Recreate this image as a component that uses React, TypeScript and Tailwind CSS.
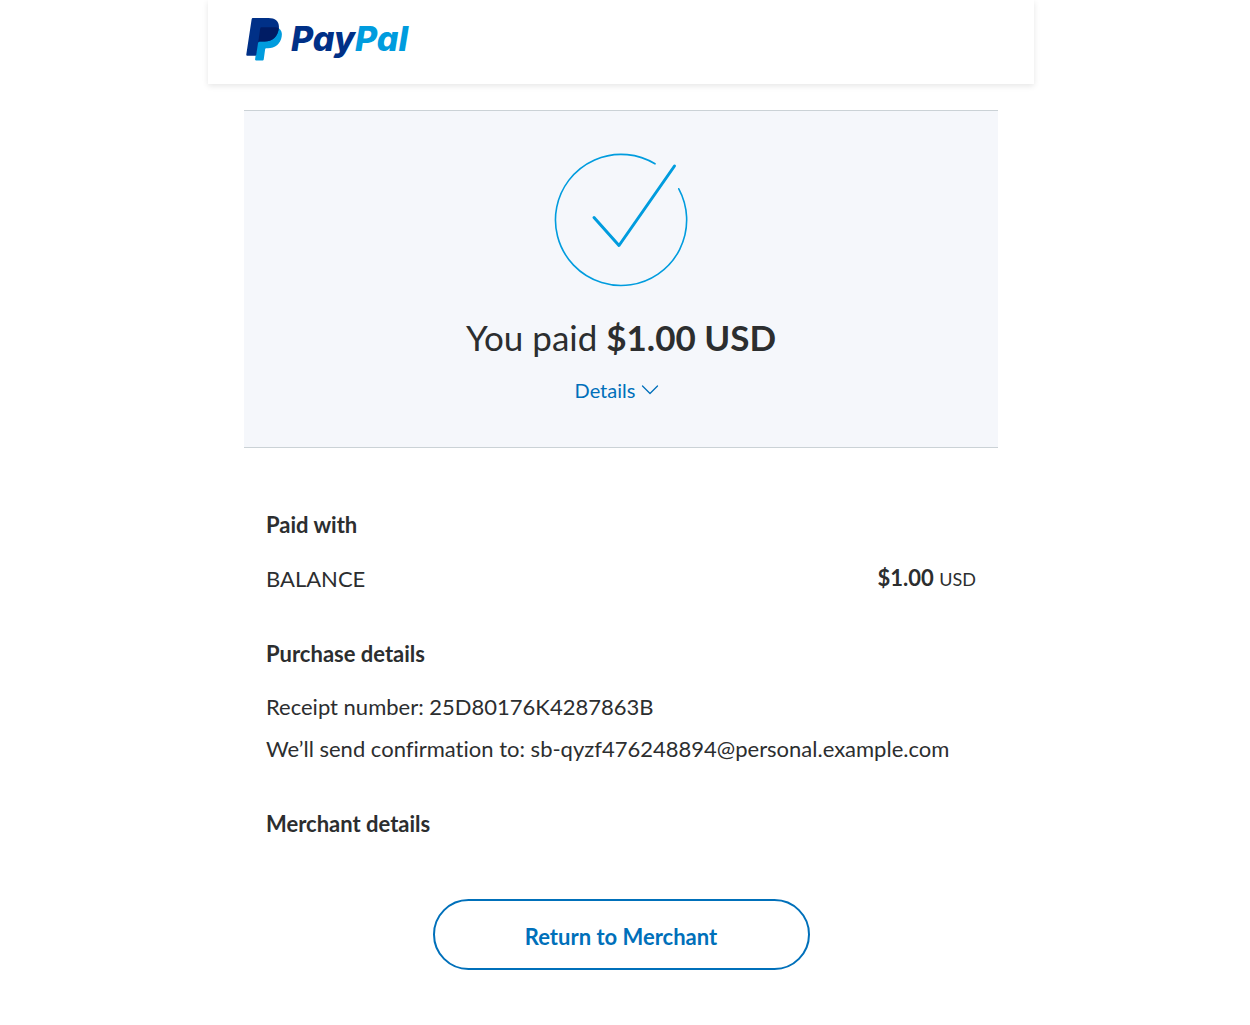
import React from "react";

const PayPalLogo = () => (
  <div className="flex items-center gap-2 h-11">
    <svg width="37" height="44" viewBox="0 0 37 44" aria-hidden="true">
      <path
        fill="#009cde"
        d="M32.5 11C35.5 13 36.4 16 35.7 19.5C34.5 27 29 31.2 22 31.2H20.5C19.7 31.2 19.2 31.7 19.1 32.5L17.8 42C17.7 43 17.1 43.5 16.3 43.5H10C9.3 43.5 9 43 9.1 42.3L13 13Z"
      />
      <path
        fill="#003087"
        d="M7.2 1H22.5C29.5 1 33.4 4.6 32.9 10.8C32.1 19.5 26.5 24.6 18.5 24.6H14C12.8 24.6 12.2 25.1 12 26.2L10.3 37.4C10.2 38.3 9.8 38.7 9 38.7H1.2C.5 38.7.2 38.2.3 37.5L5.6 2.4C5.8 1.4 6.3 1 7.2 1Z"
      />
      <path
        fill="#001c64"
        d="M15.5 10.3H28C30 10.3 31.5 10.5 32.8 11C32 19.5 26.5 24.6 18.5 24.6H14C13.2 24.6 12.5 24.8 12.2 25.4L14.2 11.5C14.3 10.7 14.8 10.3 15.5 10.3Z"
      />
    </svg>
    <span className="font-['Inter',sans-serif] text-[34px] leading-11 font-extrabold italic text-[#003087] [font-feature-settings:'cv11']">
      Pay<span className="text-[#009cde]">Pal</span>
    </span>
  </div>
);

const SuccessMark = () => (
  <svg
    width="134"
    height="134"
    viewBox="0 0 134 134"
    fill="none"
    stroke="#009cde"
    strokeLinecap="round"
    aria-hidden="true"
  >
    <path strokeWidth="1.6" d="M101 10.8A65.6 65.6 0 1 0 124.8 35.8" />
    <path strokeWidth="3" strokeLinejoin="round" d="M40 64.5L65 92.5L120.5 13" />
  </svg>
);

interface SectionProps {
  title: string;
  children?: React.ReactNode;
}

const Section: React.FC<SectionProps> = ({ title, children }) => (
  <section className="pb-[33px]">
    <h2 className="font-bold leading-[42px] mb-[11px]">{title}</h2>
    {children}
  </section>
);

export default function App() {
  return (
    <div className="bg-white pr-2 pb-14 font-['Lato',sans-serif] text-[22px] leading-[42px] text-[#2c2e2f] [font-variant-ligatures:none]">
      <div className="mx-auto max-w-[826px]">
        <header className="px-[38px] pt-[17px] pb-[23px] shadow-[0_2px_6px_rgba(0,0,0,0.1)]">
          <PayPalLogo />
        </header>

        <main className="mx-9 mt-[26px]">
          <div className="flex flex-col items-center border-y border-[#cbd2d6] bg-[#f5f7fb] pt-[42px] pb-9">
            <SuccessMark />
            <h1 className="mt-[26px] text-[35px] leading-[48px]">
              You paid <strong>$1.00 USD</strong>
            </h1>
            <button
              type="button"
              className="mt-2 mr-2 flex items-center gap-1.5 text-[20px] leading-[42px] text-[#0070ba]"
            >
              Details
              <svg
                width="18"
                height="10"
                viewBox="0 0 18 10"
                fill="none"
                stroke="currentColor"
                strokeWidth="1.3"
                strokeLinecap="round"
                strokeLinejoin="round"
                aria-hidden="true"
              >
                <path d="M1.5 1L9 8.5L16.5 1" />
              </svg>
            </button>
          </div>

          <div className="px-[22px] pt-14">
            <Section title="Paid with">
              <div className="flex items-center justify-between">
                <span>BALANCE</span>
                <span>
                  <strong>$1.00</strong> <span className="text-[18px]">USD</span>
                </span>
              </div>
            </Section>
            <Section title="Purchase details">
              <p>Receipt number: 25D80176K4287863B</p>
              <p>We’ll send confirmation to: sb-qyzf476248894@personal.example.com</p>
            </Section>
            <Section title="Merchant details" />
          </div>

          <div className="mt-2.5 flex justify-center">
            <button
              type="button"
              className="w-1/2 rounded-full border-2 border-[#0070ba] pt-[15px] pb-2.5 font-bold text-[#0070ba]"
            >
              Return to Merchant
            </button>
          </div>
        </main>
      </div>
    </div>
  );
}
